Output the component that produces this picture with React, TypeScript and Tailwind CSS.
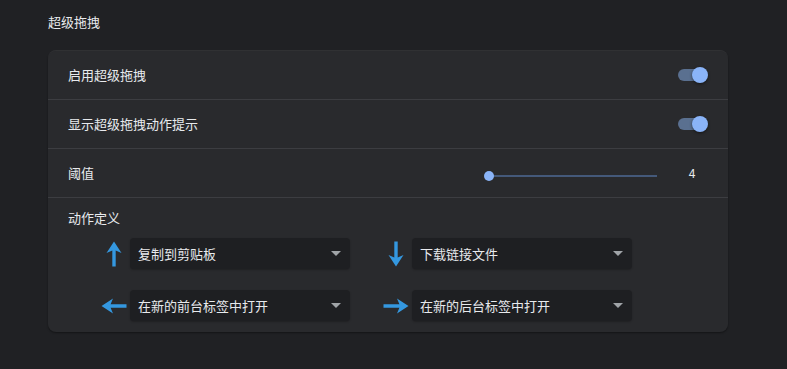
import React from "react";

const font = { fontFamily: '"Noto Sans CJK SC", "Noto Sans", sans-serif' };

function Arrow({ dir }: { dir: "up" | "down" | "left" | "right" }) {
  const rot = dir === "up" ? 0 : dir === "down" ? 180 : dir === "left" ? -90 : 90;
  return (
    <div className="w-[32px] h-[31px] flex items-center justify-center">
      <svg width="26" height="26" viewBox="0 0 26 26" style={{ transform: `rotate(${rot}deg)` }}>
        <path d="M13 0.5 L5.5 12 L11.3 9.6 L11.3 25.5 L14.7 25.5 L14.7 9.6 L20.5 12 Z" fill="#3498e0" />
      </svg>
    </div>
  );
}

function Select({ label }: { label: string }) {
  return (
    <div className="w-[220px] h-[31px] rounded-[4px] bg-[#1e1f22] flex items-center pl-[8px] pr-[9px] text-[13px] text-[#e8eaed] shadow-[0_1px_2px_rgba(0,0,0,0.25)]">
      <span className="flex-1">{label}</span>
      <svg width="10" height="5" viewBox="0 0 10 5">
        <path d="M0 0 L10 0 L5 5 Z" fill="#a0a4a8" />
      </svg>
    </div>
  );
}

function Toggle() {
  return (
    <div className="relative w-[30px] h-[16px]">
      <div className="absolute left-0 top-[2px] w-[28px] h-[12px] rounded-full bg-[#5a7090]" />
      <div className="absolute right-0 top-0 w-[16px] h-[16px] rounded-full bg-[#8ab4f8] shadow-[0_1px_3px_rgba(0,0,0,0.5)]" />
    </div>
  );
}

export default function App() {
  return (
    <div className="min-h-[369px] bg-[#202124] px-[48px] text-[#e8eaed]" style={font}>
      <div className="pt-[14px] h-[51px] text-[13px] leading-[16px]">超级拖拽</div>
      <div className="w-[680px] rounded-[8px] bg-[#292a2d] shadow-[0_1px_2px_rgba(0,0,0,0.4),0_-1px_0_rgba(255,255,255,0.08)]">
        <div className="h-[49px] border-b border-[#3c3d41] flex items-center pl-[20px] pr-[20px] text-[13px]">
          <span className="flex-1">启用超级拖拽</span>
          <Toggle />
        </div>
        <div className="h-[49px] border-b border-[#3c3d41] flex items-center pl-[20px] pr-[20px] text-[13px]">
          <span className="flex-1">显示超级拖拽动作提示</span>
          <Toggle />
        </div>
        <div className="h-[49px] border-b border-[#3c3d41] flex items-center pl-[20px] pr-[20px] text-[13px]">
          <span className="flex-1">阈值</span>
          <div className="relative w-[178px] h-[12px] mt-[6px]">
            <div className="absolute left-[5px] right-[5px] top-[5px] h-[2px] bg-[#44597a]" />
            <div className="absolute left-0 top-[1px] w-[10px] h-[10px] rounded-full bg-[#8ab4f8]" />
          </div>
          <span className="w-[32px] ml-[14px] text-center text-[12px]">4</span>
        </div>
        <div className="pl-[20px] pt-[10px] pb-[11px]">
          <div className="text-[13px] leading-[20px] h-[30px]">动作定义</div>
          <div className="pl-[30px] grid grid-cols-[252px_252px] gap-x-[30px] gap-y-[21px]">
            <div className="flex">
              <Arrow dir="up" />
              <Select label="复制到剪贴板" />
            </div>
            <div className="flex">
              <Arrow dir="down" />
              <Select label="下载链接文件" />
            </div>
            <div className="flex">
              <Arrow dir="left" />
              <Select label="在新的前台标签中打开" />
            </div>
            <div className="flex">
              <Arrow dir="right" />
              <Select label="在新的后台标签中打开" />
            </div>
          </div>
        </div>
      </div>
    </div>
  );
}
